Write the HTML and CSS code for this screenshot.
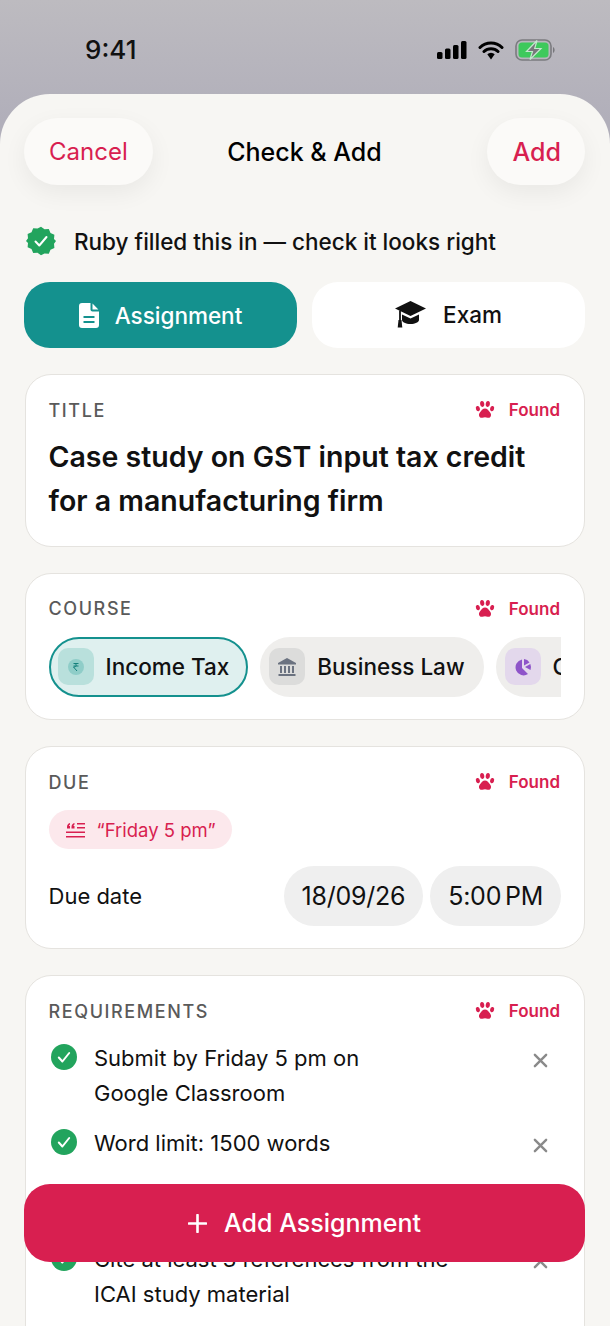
FILE: index.html
```html
<!DOCTYPE html>
<html lang="en">
<head>
<meta charset="UTF-8">
<meta name="viewport" content="width=device-width, initial-scale=1.0">
<title>Check &amp; Add</title>
<link rel="stylesheet" href="styles.css">
</head>
<body>

<svg class="defs" width="0" height="0">
  <symbol id="paw" viewBox="0 0 20 20">
    <ellipse cx="2.9" cy="8.6" rx="2" ry="2.7" transform="rotate(-18 2.9 8.6)"/>
    <ellipse cx="7.2" cy="4" rx="2.1" ry="2.9" transform="rotate(-6 7.2 4)"/>
    <ellipse cx="12.8" cy="4" rx="2.1" ry="2.9" transform="rotate(6 12.8 4)"/>
    <ellipse cx="17.1" cy="8.6" rx="2" ry="2.7" transform="rotate(18 17.1 8.6)"/>
    <path d="M10 8.4c2.2 0 3.3 1.7 4.3 3.2 1.1 1.5 2.1 2.5 1.6 4.3-.5 1.5-1.9 2.1-3.3 1.8-1-.2-1.7-.5-2.6-.5s-1.600.3-2.600.5c-1.400.3-2.800-.3-3.300-1.800-.5-1.800.5-2.800 1.600-4.300 1-1.500 2.100-3.200 4.300-3.200z"/>
  </symbol>
  <symbol id="tick" viewBox="0 0 26 26">
    <circle cx="13" cy="13" r="13" fill="#22a45d"/>
    <path d="M7.8 13.5l3.6 4 6.800-8.500" fill="none" stroke="#fff" stroke-width="2" stroke-linecap="round" stroke-linejoin="round"/>
  </symbol>
  <symbol id="cross" viewBox="0 0 16 16">
    <path d="M2 2l12 12M14 2L2 14" fill="none" stroke="#8a8a8a" stroke-width="2.6" stroke-linecap="round"/>
  </symbol>
</svg>

<div class="status-bar">
  <span class="clock">9:41</span>
  <div class="status-icons">
    <svg width="30" height="18" viewBox="0 0 30 18">
      <rect x="0" y="11" width="5.5" height="7" rx="1.5"/>
      <rect x="8" y="7.500" width="5.5" height="10.500" rx="1.5"/>
      <rect x="16" y="4" width="5.5" height="14" rx="1.5"/>
      <rect x="24" y="0" width="5.5" height="18" rx="1.5"/>
    </svg>
    <svg width="26" height="20" viewBox="0 0 26 20">
      <path d="M2 7.500a15.500 15.500 0 0 1 22 0M6 11.500a10 10 0 0 1 14 0" fill="none" stroke="#000" stroke-width="3" stroke-linecap="round"/>
      <path d="M9.300 14.200a5.200 5.200 0 0 1 7.400 0L13 19.500z"/>
    </svg>
    <svg width="41" height="22" viewBox="0 0 41 22">
      <rect x="1" y="1" width="35" height="20" rx="6" fill="none" stroke="#7b7b7f" stroke-width="1.6"/>
      <rect x="3.500" y="3.500" width="30" height="15" rx="3.500" fill="#3ec95c"/>
      <path d="M38 8v6c1-.5 1.600-1.600 1.600-3S39 8.500 38 8z" fill="#77777b"/>
      <path d="M22 1.500L11.500 12.500h6L15 20.500 26 9.500h-6.300z" fill="#77777b" stroke="#c3e8cd" stroke-width="1.2"/>
    </svg>
  </div>
</div>

<div class="sheet">
  <div class="nav">
    <button class="nav-btn nav-cancel">Cancel</button>
    <h1 class="nav-title">Check &amp; Add</h1>
    <button class="nav-btn nav-add">Add</button>
  </div>

  <div class="notice">
    <svg width="30" height="30" viewBox="0 0 30 30">
      <path d="M15 .8l3.500 2.500 4.300-.4 1.700 4 3.900 1.800-.4 4.300L30 15l-2 2.700.4 4.300-3.900 1.800-1.700 4-4.300-.4L15 29.200l-3.500-2.500-4.300.4-1.700-4-3.900-1.800.4-4.300L0 15l2-2.700-.4-4.300 3.900-1.800 1.700-4 4.300.4z" fill="#22a45d"/>
      <path d="M9.500 15.500l3.800 4 7.200-8.500" fill="none" stroke="#fff" stroke-width="2" stroke-linecap="round" stroke-linejoin="round"/>
    </svg>
    <span>Ruby filled this in — check it looks right</span>
  </div>

  <div class="tabs">
    <div class="tab tab-active">
      <svg width="20" height="25" viewBox="0 0 20 25">
        <path d="M3 0h8.500v6.500c0 1.100.9 2 2 2H20V22a3 3 0 0 1-3 3H3a3 3 0 0 1-3-3V3a3 3 0 0 1 3-3zM13.500.6L19.400 6.500h-5.900zM4.500 13v2h11v-2zM4.500 18v2h11v-2z" fill="#fff" fill-rule="evenodd"/>
      </svg>
      Assignment
    </div>
    <div class="tab tab-exam">
      <svg width="31" height="28" viewBox="0 0 31 28">
        <path d="M15.500 1L31 8.500 15.500 16 0 8.500z" fill="#111"/>
        <path d="M7 14.500V20c0 2 3.800 4 8.500 4s8.500-2 8.500-4v-5.500L15.500 18.500z" fill="#111"/>
        <path d="M5 10.500V20" stroke="#111" stroke-width="1.8"/>
        <path d="M3.500 20h3l.8 7.500H2.700z" fill="#111"/>
      </svg>
      Exam
    </div>
  </div>

  <section class="card card-title">
    <div class="card-head">
      <span class="card-label">TITLE</span>
      <span class="found"><svg class="paw" width="20" height="20"><use href="#paw"/></svg>Found</span>
    </div>
    <p class="title-text">Case study on GST input tax credit for a manufacturing firm</p>
  </section>

  <section class="card">
    <div class="card-head">
      <span class="card-label">COURSE</span>
      <span class="found"><svg class="paw" width="20" height="20"><use href="#paw"/></svg>Found</span>
    </div>
    <div class="chips">
      <div class="chip chip-active">
        <span class="chip-icon icon-teal">
          <svg width="16" height="16" viewBox="0 0 16 16">
            <circle cx="8" cy="8" r="8" fill="#8fcdc8"/>
            <path d="M5.500 4.500h5M5.500 7h5M6 4.500c3 0 3 3.500 0 3.500H5.500l3.500 4" fill="none" stroke="#14807c" stroke-width="1"/>
          </svg>
        </span>
        Income Tax
      </div>
      <div class="chip">
        <span class="chip-icon icon-grey">
          <svg width="20" height="20" viewBox="0 0 20 20" fill="#6b7280">
            <path d="M10 1L19 6v1.500H1V6z"/>
            <rect x="3" y="9" width="2" height="7"/>
            <rect x="7" y="9" width="2" height="7"/>
            <rect x="11" y="9" width="2" height="7"/>
            <rect x="15" y="9" width="2" height="7"/>
            <rect x="1.500" y="17" width="17" height="2"/>
          </svg>
        </span>
        Business Law
      </div>
      <div class="chip">
        <span class="chip-icon icon-purple">
          <svg width="18" height="18" viewBox="0 0 18 18" fill="#8e54c9">
            <path d="M8 1.500v8.500l6 6A8 8 0 1 1 8 1.500z"/>
            <path d="M10 1a7.500 7.500 0 0 1 5.500 3.500L10 7.500z"/>
            <path d="M16.300 6a8 8 0 0 1 .2 6L11 9z"/>
          </svg>
        </span>
        Costing
      </div>
    </div>
  </section>

  <section class="card">
    <div class="card-head">
      <span class="card-label">DUE</span>
      <span class="found"><svg class="paw" width="20" height="20"><use href="#paw"/></svg>Found</span>
    </div>
    <div class="quote">
      <svg width="19" height="16" viewBox="0 0 19 16" fill="#d81f50">
        <path d="M1 5c0-2 1-3.500 3-4v1.500C3.300 3 3 3.500 3 4h1v2.500H1zM5.500 5c0-2 1-3.500 3-4v1.500c-.7.500-1 1-1 1.500h1v2.500h-3z"/>
        <rect x="11" y="1" width="8" height="1.5"/>
        <rect x="11" y="5" width="8" height="1.5"/>
        <rect x="0" y="9.500" width="19" height="1.5"/>
        <rect x="0" y="14" width="19" height="1.5"/>
      </svg>
      “Friday 5 pm”
    </div>
    <div class="due-row">
      <span class="due-label">Due date</span>
      <span class="pickers">
        <span class="picker picker-date">18/09/26</span>
        <span class="picker picker-time">5:00 PM</span>
      </span>
    </div>
  </section>

  <section class="card card-last">
    <div class="card-head">
      <span class="card-label">REQUIREMENTS</span>
      <span class="found"><svg class="paw" width="20" height="20"><use href="#paw"/></svg>Found</span>
    </div>
    <ul class="reqs">
      <li class="req">
        <svg class="req-check" width="26" height="26"><use href="#tick"/></svg>
        <span class="req-text">Submit by Friday 5 pm on<br>Google Classroom</span>
        <svg class="req-x" width="15" height="15"><use href="#cross"/></svg>
      </li>
      <li class="req">
        <svg class="req-check" width="26" height="26"><use href="#tick"/></svg>
        <span class="req-text">Word limit: 1500 words</span>
        <svg class="req-x" width="15" height="15"><use href="#cross"/></svg>
      </li>
      <li class="req req-under">
        <svg class="req-check" width="26" height="26"><use href="#tick"/></svg>
        <span class="req-text">Cite at least 3 references from the<br>ICAI study material</span>
        <svg class="req-x" width="15" height="15"><use href="#cross"/></svg>
      </li>
    </ul>
  </section>
</div>

<button class="add-main">
  <svg width="19" height="19" viewBox="0 0 19 19">
    <path d="M9.500 1v17M1 9.500h17" stroke="#fff" stroke-width="2.6" stroke-linecap="round"/>
  </svg>
  Add Assignment
</button>

</body>
</html>
```

FILE: styles.css
```css
* {
  box-sizing: border-box;
}
html, body {
  margin: 0;
  height: 1326px;
  overflow: hidden;
}
body {
  position: relative;
  font-family: Inter, "Liberation Sans", sans-serif;
  color: #111;
  background: linear-gradient(#bdbbc0, #b1afba 120px);
}
.defs {
  position: absolute;
}
.status-bar {
  height: 94px;
  display: flex;
  justify-content: space-between;
  align-items: flex-start;
  padding: 36px 54px 0 85px;
}
.clock {
  font-size: 26px;
  font-weight: 500;
  line-height: 28px;
}
.status-icons {
  display: flex;
  align-items: center;
  gap: 11px;
  margin-top: 3px;
}
.sheet {
  height: 1232px;
  padding: 24px 25px 0 24px;
  background: #f7f6f3;
  border-radius: 50px 50px 0 0;
}
.nav {
  display: grid;
  grid-template-columns: 1fr auto 1fr;
  align-items: center;
}
.nav-btn {
  height: 67px;
  padding: 0 25px;
  border: none;
  border-radius: 34px;
  background: #fbfaf8;
  box-shadow: 0 8px 24px rgba(0, 0, 0, 0.06);
  font-family: inherit;
  font-size: 24px;
  color: #d81f50;
}
.nav-cancel {
  justify-self: start;
}
.nav-add {
  justify-self: end;
  padding: 0 24px 0 26px;
  font-size: 25px;
  font-weight: 500;
}
.nav-title {
  margin: 0;
  font-size: 25px;
  font-weight: 500;
  color: #000;
}
.notice {
  display: flex;
  align-items: center;
  gap: 18px;
  margin: 41px 0 0 2px;
  height: 30px;
  font-size: 22.5px;
  font-weight: 500;
}
.tabs {
  display: flex;
  gap: 15px;
  margin-top: 26px;
}
.tab {
  flex: 1;
  height: 66px;
  display: flex;
  align-items: center;
  justify-content: center;
  gap: 16px;
  border-radius: 26px;
  background: #fff;
  font-size: 22.5px;
  font-weight: 500;
}
.tab-active {
  background: #14918e;
  color: #fff;
}
.tab-exam {
  gap: 17px;
  padding-bottom: 2px;
}
.card {
  margin: 26px 0 0 1px;
  padding: 23px 23px 22.5px 22.5px;
  background: #fff;
  border: 1.5px solid #e5e3df;
  border-radius: 26px;
}
.card-head {
  display: flex;
  justify-content: space-between;
  align-items: center;
  height: 24px;
}
.card-label {
  font-size: 18px;
  font-weight: 500;
  letter-spacing: 1.6px;
  color: #5a5a5a;
}
.found {
  display: flex;
  align-items: center;
  gap: 14px;
  padding-right: 1px;
  font-size: 17px;
  font-weight: 600;
  color: #d81f50;
}
.paw {
  fill: #d81f50;
}
.title-text {
  margin: 13px 0 0;
  font-size: 28.5px;
  font-weight: 600;
  line-height: 44px;
  color: #111;
}
.chips {
  display: flex;
  gap: 12px;
  margin-top: 16px;
  overflow: hidden;
}
.chip {
  flex: none;
  height: 60px;
  display: flex;
  align-items: center;
  gap: 12px;
  padding: 0 19px 0 9px;
  border-radius: 30px;
  background: #efeeec;
  font-size: 22.5px;
  font-weight: 500;
}
.chip-active {
  background: #dff0ef;
  border: 2px solid #14918e;
  padding: 0 17px 0 7px;
}
.chip-icon {
  width: 36px;
  height: 37px;
  display: flex;
  align-items: center;
  justify-content: center;
  border-radius: 10px;
}
.icon-teal {
  background: #b9e0dc;
}
.icon-grey {
  background: #dcdcdb;
}
.icon-purple {
  background: #e3d8ec;
}
.quote {
  display: flex;
  width: fit-content;
  align-items: center;
  gap: 12px;
  height: 39px;
  margin-top: 16px;
  padding: 0 16px 0 17px;
  border-radius: 20px;
  background: #fce8ec;
  font-size: 18.5px;
  color: #d81f50;
}
.due-row {
  display: flex;
  justify-content: space-between;
  align-items: center;
  margin-top: 16.5px;
}
.due-label {
  font-size: 22px;
}
.pickers {
  display: flex;
  gap: 7px;
}
.picker {
  height: 60px;
  display: flex;
  align-items: center;
  border-radius: 30px;
  background: #efefef;
  font-size: 25px;
  letter-spacing: -0.25px;
}
.picker-date {
  padding: 0 18px;
}
.picker-time {
  padding: 0 18px;
  word-spacing: -3px;
}
.card-last {
  padding-bottom: 60px;
}
.reqs {
  list-style: none;
  margin: 18px 0 0;
  padding: 0;
}
.req {
  display: flex;
  align-items: flex-start;
  gap: 17.5px;
  margin-bottom: 15px;
  font-size: 22px;
  line-height: 35px;
}
.req-check {
  flex: none;
  margin: 3px 0 0 2px;
}
.req-text {
  flex: 1;
}
.req-x {
  flex: none;
  margin: 12px 13px 0 0;
}
.req-under {
  margin-top: 81px;
}
.add-main {
  position: absolute;
  left: 24px;
  top: 1184px;
  width: 561px;
  height: 78px;
  display: flex;
  align-items: center;
  justify-content: center;
  gap: 17px;
  border: none;
  border-radius: 26px;
  background: #d81f50;
  font-family: inherit;
  font-size: 25px;
  font-weight: 500;
  color: #fff;
}
```
